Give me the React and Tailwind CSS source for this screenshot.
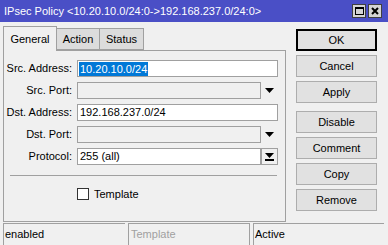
import React from 'react';

const rows = [
  { label: 'Src. Address:', value: '10.20.10.0/24', kind: 'selected' },
  { label: 'Src. Port:', value: '', kind: 'disabled' },
  { label: 'Dst. Address:', value: '192.168.237.0/24', kind: 'text' },
  { label: 'Dst. Port:', value: '', kind: 'disabled' },
  { label: 'Protocol:', value: '255 (all)', kind: 'combo' },
];

const buttons = ['OK', 'Cancel', 'Apply', 'Disable', 'Comment', 'Copy', 'Remove'];

function DownArrow() {
  return (
    <svg width="9" height="5" viewBox="0 0 9 5">
      <path d="M0 0h9L4.5 5z" fill="#000" />
    </svg>
  );
}

function Field({ row }) {
  if (row.kind === 'disabled') {
    return (
      <div className="flex items-center">
        <div className="w-[184px] h-[17px] border border-[#a0a0a0] bg-[#f0f0f0]" />
        <div className="w-[17px] h-[17px] flex items-center justify-center">
          <DownArrow />
        </div>
      </div>
    );
  }
  if (row.kind === 'combo') {
    return (
      <div className="flex items-center">
        <div className="w-[184px] h-[17px] border border-[#a0a0a0] bg-white flex items-center pl-[2px]">
          {row.value}
        </div>
        <div className="w-[17px] h-[17px] border border-[#a0a0a0] bg-[#f0f0f0] flex items-center justify-center">
          <svg width="9" height="8" viewBox="0 0 9 8">
            <path d="M0 0h9L4.5 5z" fill="#000" />
            <rect x="0" y="6" width="9" height="2" fill="#000" />
          </svg>
        </div>
      </div>
    );
  }
  return (
    <div className="w-[201px] h-[17px] border border-[#a0a0a0] bg-white flex items-center pl-[1px]">
      {row.kind === 'selected' ? (
        <span className="bg-[#0078d7] text-white px-[1px] leading-[14px]">{row.value}</span>
      ) : (
        <span className="px-[1px]">{row.value}</span>
      )}
    </div>
  );
}

export default function App() {
  return (
    <div
      className="w-[388px] h-[245px] bg-[#f0f0f0] flex flex-col text-[11px] text-black overflow-hidden whitespace-nowrap"
      style={{ fontFamily: '"Liberation Sans", Arial, sans-serif' }}
    >
      {/* Title bar */}
      <div className="h-[22px] shrink-0 bg-[#4a4fc6] flex items-center justify-between pl-[4px] pr-[6px]">
        <span className="text-white">
          IPsec Policy &lt;10.20.10.0/24:0-&gt;192.168.237.0/24:0&gt;
        </span>
        <div className="flex gap-[2px]">
          <div className="w-[14px] h-[14px] bg-[#d4d4d4] border border-[#404040] flex items-center justify-center">
            <div className="w-[9px] h-[8px] border border-black border-t-2" />
          </div>
          <div className="w-[14px] h-[14px] bg-[#d4d4d4] border border-[#404040] flex items-center justify-center">
            <svg width="8" height="8" viewBox="0 0 8 8">
              <path d="M1 1L7 7M7 1L1 7" stroke="#000" strokeWidth="2" />
            </svg>
          </div>
        </div>
      </div>

      <div className="flex h-[201px] shrink-0">
        {/* Left: tabs + panel */}
        <div className="ml-[3px] w-[283px] flex flex-col">
          <div className="h-[26px] mt-[2px] flex items-end shrink-0">
            <div className="h-[25px] w-[54px] border border-b-0 border-[#a0a0a0] bg-[#f0f0f0] flex items-center justify-center relative top-[1px] z-10">
              General
            </div>
            <div className="h-[22px] w-[43px] border border-l-0 border-[#a0a0a0] bg-[#dcdcdc] flex items-center justify-center">
              Action
            </div>
            <div className="h-[22px] w-[44px] border border-l-0 border-[#a0a0a0] bg-[#dcdcdc] flex items-center justify-center">
              Status
            </div>
          </div>
          <div className="h-[172px] shrink-0 border border-[#a0a0a0] pt-[9px] flex flex-col">
            <div className="flex flex-col gap-[5px]">
              {rows.map((row) => (
                <div key={row.label} className="flex items-center">
                  <div className="w-[69px] text-right pr-[1px]">{row.label}</div>
                  <div className="ml-[4px]">
                    <Field row={row} />
                  </div>
                </div>
              ))}
            </div>
            <div className="mt-[10px] ml-[6px] mr-[8px] border-t border-[#a0a0a0]" />
            <div className="mt-[10px] ml-[73px] flex items-center gap-[5px]">
              <div className="w-[12px] h-[12px] border border-[#333] bg-white" />
              <span>Template</span>
            </div>
          </div>
        </div>

        {/* Right: buttons */}
        <div className="ml-[10px] w-[81px] mt-[7px] flex flex-col gap-[4px]">
          {buttons.map((b) => (
            <div
              key={b}
              className={
                'h-[22px] shrink-0 flex items-center justify-center bg-[#e1e1e1] ' +
                (b === 'OK' ? 'border-2 border-black' : 'border border-[#adadad]') +
                (b === 'Disable' ? ' mt-[4px]' : '')
              }
            >
              {b}
            </div>
          ))}
        </div>
      </div>

      {/* Status bar */}
      <div className="h-[22px] shrink-0 flex pl-[3px] gap-[3px]">
        <div className="w-[122px] border-t border-l border-[#a0a0a0] flex items-center pl-[1px]">enabled</div>
        <div className="w-[122px] border-t border-l border-r border-[#a0a0a0] flex items-center pl-[2px] text-[#a0a0a0]">Template</div>
        <div className="w-[131px] border-t border-l border-[#a0a0a0] flex items-center pl-[1px]">Active</div>
      </div>
    </div>
  );
}
